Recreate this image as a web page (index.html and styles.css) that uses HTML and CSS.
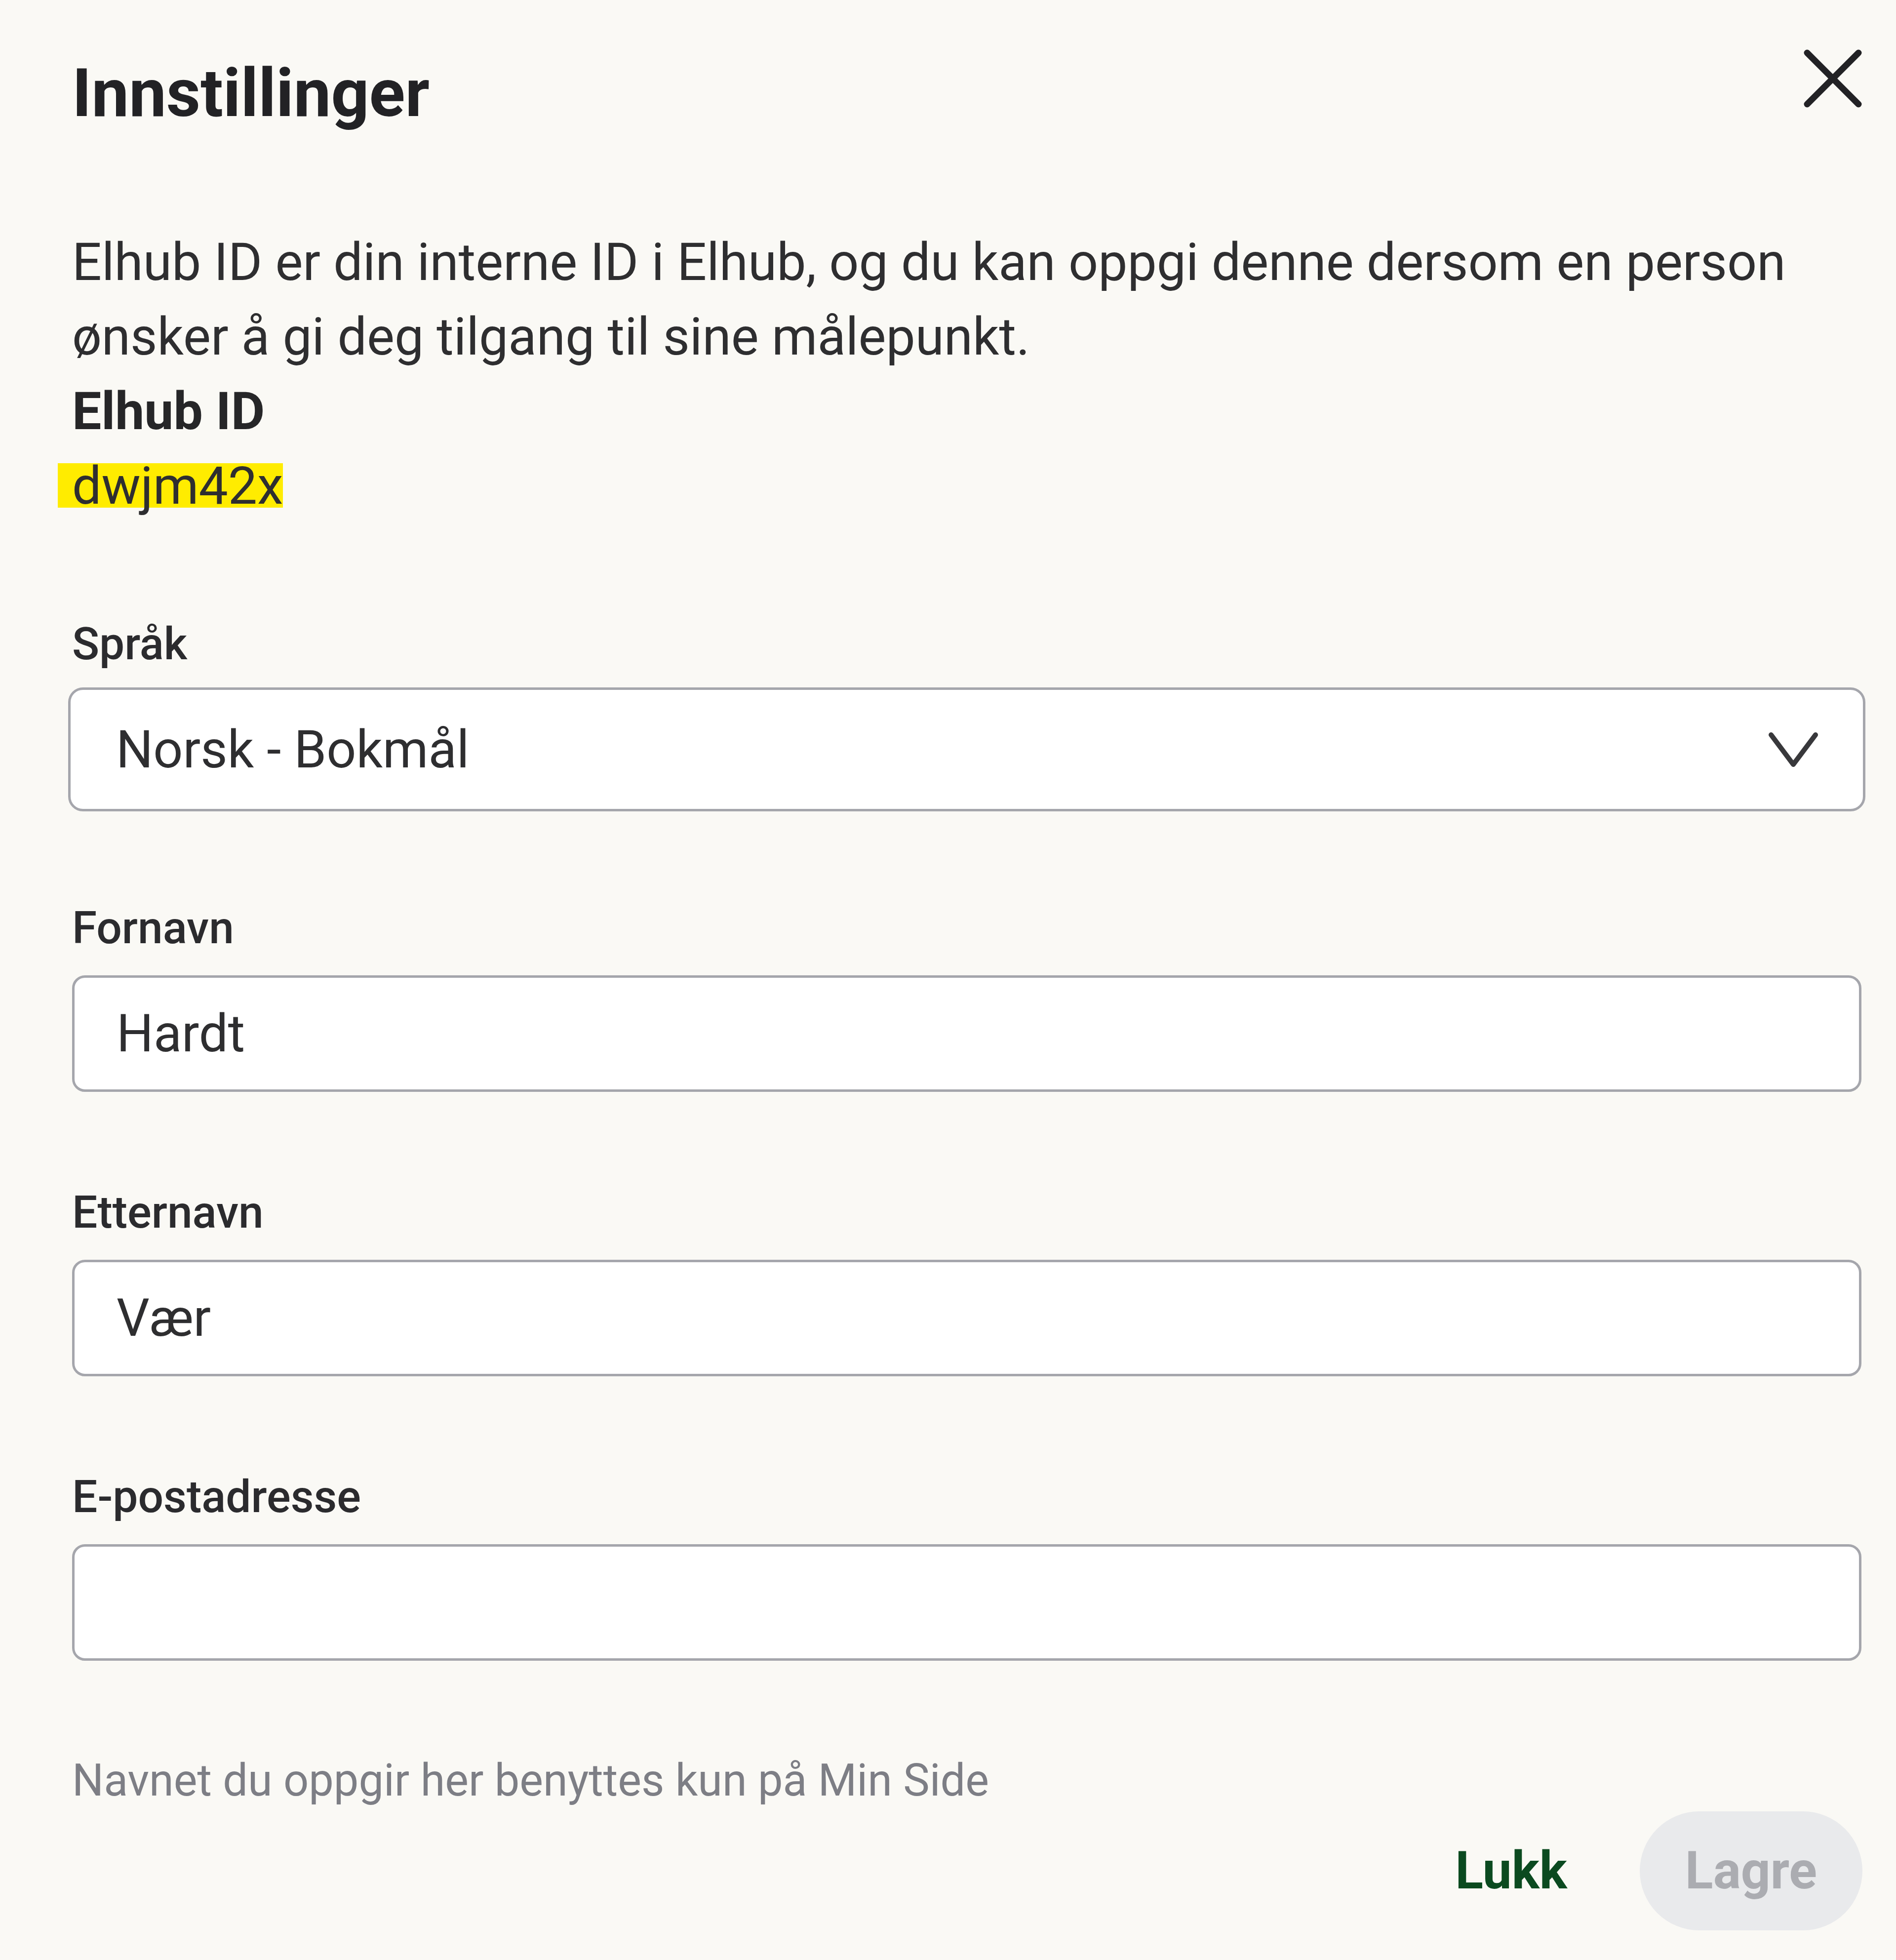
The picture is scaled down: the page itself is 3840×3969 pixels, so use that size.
FILE: index.html
```html
<html>
<head>
  <meta charset="utf-8">
  <title>Innstillinger</title>
  <link rel="stylesheet" href="styles.css">
</head>
<body>
  <div class="dialog">
    <header class="dialog-header">
      <h1 class="dialog-title">Innstillinger</h1>
      <button class="close-btn" aria-label="Lukk">
        <svg width="122" height="122" viewBox="0 0 122 122">
          <line x1="9" y1="9" x2="113" y2="113" />
          <line x1="113" y1="9" x2="9" y2="113" />
        </svg>
      </button>
    </header>

    <div class="dialog-body">
      <p class="intro">
        Elhub ID er din interne ID i Elhub, og du kan oppgi denne dersom en person ønsker å gi deg tilgang til sine målepunkt.<br>
        <strong>Elhub ID</strong><br>
        <span class="elhub-id">dwjm42x</span>
      </p>

      <div class="field">
        <label class="field-label" for="lang">Språk</label>
        <div class="select" id="lang" role="combobox">
          <span>Norsk - Bokmål</span>
          <svg width="100" height="70" viewBox="0 0 100 70">
            <polyline points="5,5 50,65 95,5" />
          </svg>
        </div>
      </div>

      <div class="field">
        <label class="field-label" for="firstname">Fornavn</label>
        <input class="text-input" id="firstname" type="text" value="Hardt">
      </div>

      <div class="field">
        <label class="field-label" for="lastname">Etternavn</label>
        <input class="text-input" id="lastname" type="text" value="Vær">
      </div>

      <div class="field">
        <label class="field-label" for="email">E-postadresse</label>
        <input class="text-input" id="email" type="email" value="">
      </div>

      <p class="hint">Navnet du oppgir her benyttes kun på Min Side</p>
    </div>

    <footer class="dialog-footer">
      <button class="btn-text">Lukk</button>
      <button class="btn-primary" disabled>Lagre</button>
    </footer>
  </div>
</body>
</html>
```

FILE: styles.css
```css
body {
  background-color: #faf9f5;
  color: #2e2e30;
  font-family: Roboto, "Liberation Sans", Arial, sans-serif;
  margin: 0;
  padding: 0;
}

.dialog {
  display: flex;
  flex-direction: column;
  padding: 98px 70px 0 146px;
}

/* header */
.dialog-header {
  align-items: flex-start;
  display: flex;
  justify-content: space-between;
}
.dialog-title {
  color: #222225;
  font-size: 135px;
  font-weight: 700;
  line-height: 166px;
  margin: 8px 0 0 0;
}
.close-btn {
  background: none;
  border: 0;
  cursor: pointer;
  height: 122px;
  margin-right: -3px;
  padding: 0;
  width: 122px;
}
.close-btn svg {
  display: block;
}
.close-btn line {
  stroke: #222225;
  stroke-linecap: round;
  stroke-width: 13;
}

/* body */
.dialog-body {
  display: flex;
  flex-direction: column;
  gap: 182px;
  padding-top: 184px;
}
.intro {
  font-size: 105.5px;
  line-height: 151px;
  margin: 0;
}
.intro strong {
  color: #262628;
  font-weight: 700;
}
.elhub-id {
  background: linear-gradient(#ffec00, #ffec00) 0 16px / 100% 90px no-repeat;
  margin-left: -29px;
  padding-left: 29px;
}

.field {
  display: flex;
  flex-direction: column;
}
.field-label {
  color: #2b2b2e;
  font-size: 91px;
  font-weight: 500;
  line-height: 124px;
  margin-bottom: 34px;
}

.select {
  align-items: center;
  background-color: #fff;
  border: 5px solid #a5a6ac;
  border-radius: 30px;
  box-sizing: border-box;
  color: #2e2e30;
  display: flex;
  font-size: 105.5px;
  height: 251px;
  justify-content: space-between;
  margin: -8px -8px;
  padding: 0 91px 0 92px;
}
.select svg {
  display: block;
}
.select polyline {
  fill: none;
  stroke: #38383b;
  stroke-linecap: round;
  stroke-linejoin: round;
  stroke-width: 10;
}

.text-input {
  background-color: #fff;
  border: 5px solid #a5a6ac;
  border-radius: 26px;
  box-sizing: border-box;
  color: #2e2e30;
  font-family: Roboto, "Liberation Sans", Arial, sans-serif;
  font-size: 105px;
  height: 236px;
  margin: 0;
  outline: none;
  padding: 0 85px;
  width: 100%;
}

.hint {
  color: #7d7e85;
  font-size: 90px;
  line-height: 122px;
  margin: 0;
}

/* footer */
.dialog-footer {
  display: flex;
  gap: 55px;
  justify-content: flex-end;
  margin-top: 1px;
}
.dialog-footer button {
  border: 0;
  font-family: Roboto, "Liberation Sans", Arial, sans-serif;
  font-size: 105px;
  font-weight: 700;
  height: 241px;
  padding: 0 92px;
}
.btn-text {
  background: none;
  color: #0b4a20;
  cursor: pointer;
}
.btn-primary {
  background-color: #e9eaec;
  border-radius: 999px;
  color: #abacb1;
  margin-right: -2px;
}
.btn-primary:disabled {
  cursor: default;
}
```
